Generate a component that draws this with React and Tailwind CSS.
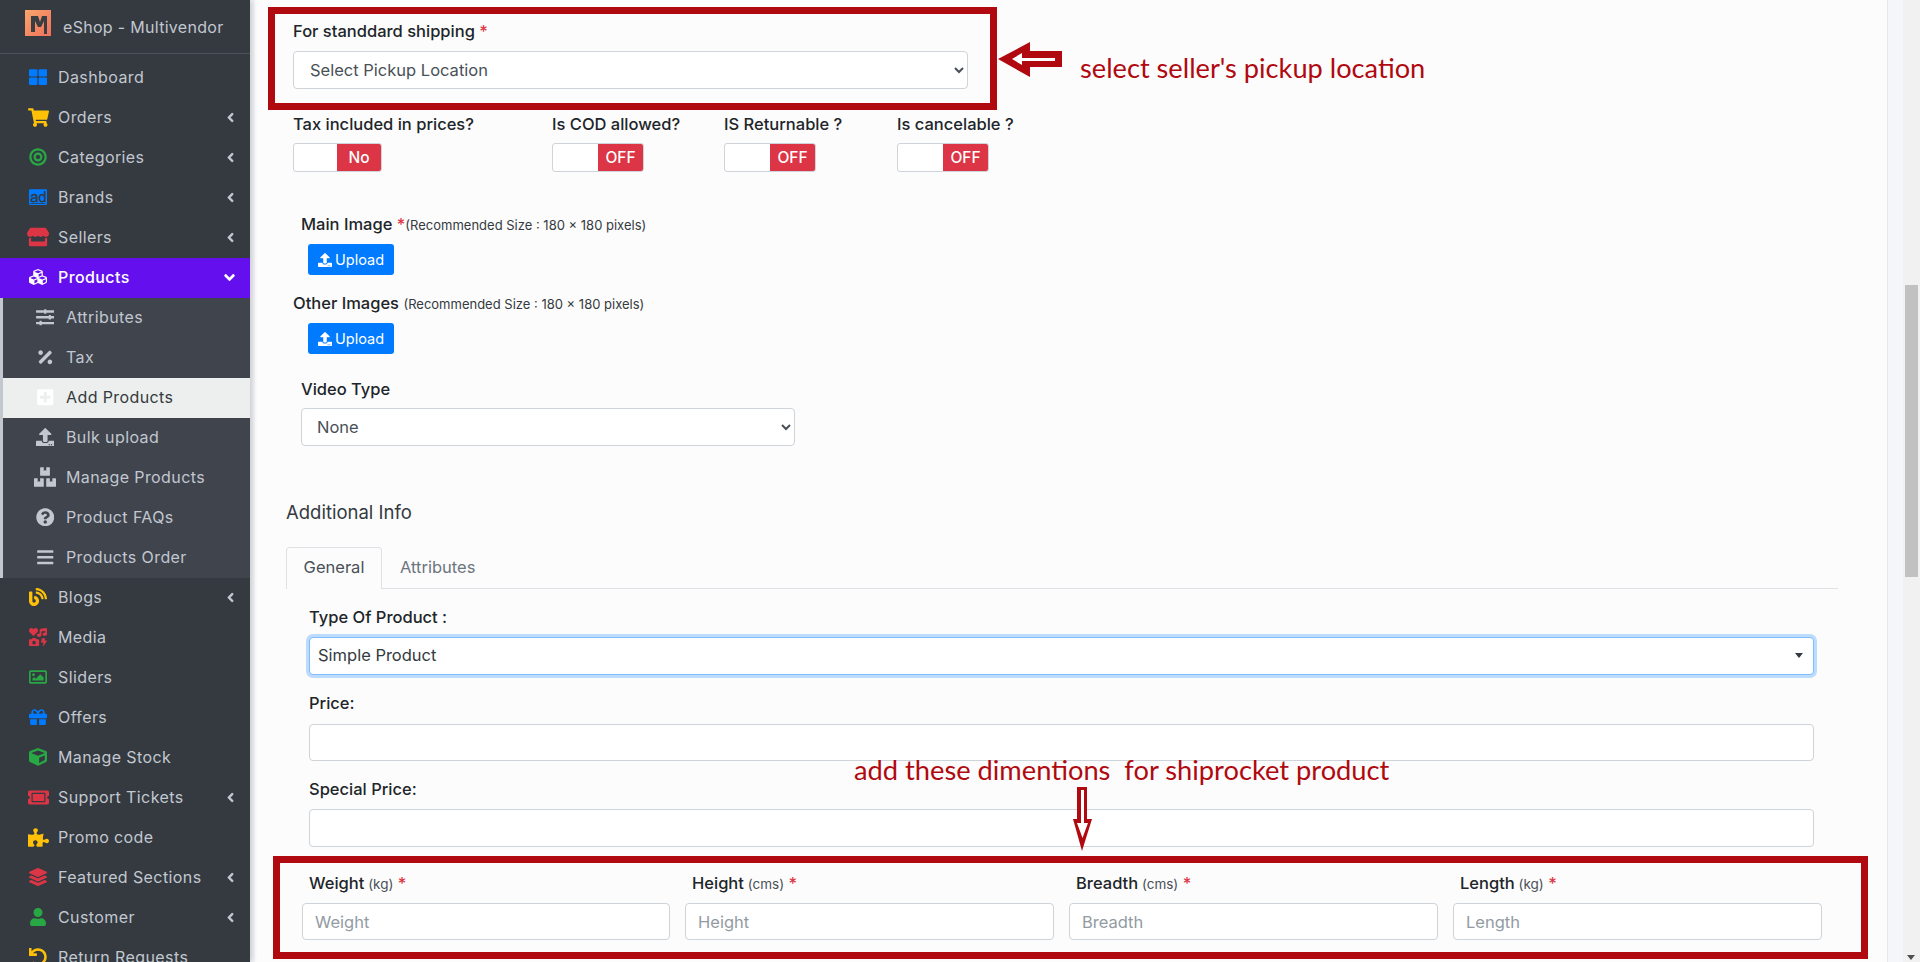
import {
  FaThLarge, FaShoppingCart, FaBullseye, FaAdversal, FaStore, FaCubes, FaSlidersH, FaPercentage,
  FaPlusSquare, FaUpload, FaBoxes, FaQuestionCircle, FaBars, FaBlog, FaIcons, FaRegImage,
  FaGift, FaCube, FaTicketAlt, FaPuzzlePiece, FaLayerGroup, FaUser, FaUndo, FaAngleLeft, FaAngleDown,
} from "react-icons/fa";

const topItems = [
  { label: "Dashboard", icon: FaThLarge, color: "text-[#007bff]" },
  { label: "Orders", icon: FaShoppingCart, color: "text-[#ffc107]", size: "text-[21px]", arrow: true },
  { label: "Categories", icon: FaBullseye, color: "text-[#28a745]", arrow: true },
  { label: "Brands", icon: FaAdversal, color: "text-[#007bff]", arrow: true },
  { label: "Sellers", icon: FaStore, color: "text-[#dc3545]", size: "text-[22px]", arrow: true },
];

const subItems = [
  { label: "Attributes", icon: FaSlidersH },
  { label: "Tax", icon: FaPercentage },
  { label: "Add Products", icon: FaPlusSquare, active: true },
  { label: "Bulk upload", icon: FaUpload },
  { label: "Manage Products", icon: FaBoxes, size: "text-[22px]" },
  { label: "Product FAQs", icon: FaQuestionCircle },
  { label: "Products Order", icon: FaBars },
];

const bottomItems = [
  { label: "Blogs", icon: FaBlog, color: "text-[#ffc107]", arrow: true },
  { label: "Media", icon: FaIcons, color: "text-[#dc3545]" },
  { label: "Sliders", icon: FaRegImage, color: "text-[#28a745]" },
  { label: "Offers", icon: FaGift, color: "text-[#007bff]" },
  { label: "Manage Stock", icon: FaCube, color: "text-[#28a745]" },
  { label: "Support Tickets", icon: FaTicketAlt, color: "text-[#dc3545]", size: "text-[21px]", arrow: true },
  { label: "Promo code", icon: FaPuzzlePiece, color: "text-[#ffc107]", size: "text-[21px]" },
  { label: "Featured Sections", icon: FaLayerGroup, color: "text-[#dc3545]", arrow: true },
  { label: "Customer", icon: FaUser, color: "text-[#28a745]", arrow: true },
  { label: "Return Requests", icon: FaUndo, color: "text-[#ffc107]" },
];

const font = "font-['Inter','Liberation_Sans',sans-serif]";

function NavItem({ item }) {
  const Icon = item.icon;
  return (
    <div className="flex h-10 shrink-0 items-center pb-[2px] pl-[27px] pr-3 text-[#c2c7d0]">
      <span className={`flex w-[22px] justify-center ${item.size || "text-[18px]"} ${item.color}`}>
        <Icon />
      </span>
      <span className="ml-[9px] flex-1 text-[16px] tracking-[0.4px]">{item.label}</span>
      {item.arrow && <FaAngleLeft className="text-[15px]" />}
    </div>
  );
}

function SubItem({ item }) {
  const Icon = item.icon;
  return (
    <div
      className={
        item.active
          ? "flex h-10 items-center bg-[#ecefed] pb-[2px] pl-[30px] text-[#343a40]"
          : "flex h-10 items-center pb-[2px] pl-[30px] text-[#c2c7d0]"
      }
    >
      <span className={`flex w-[24px] justify-center ${item.size || "text-[18.5px]"} ${item.active ? "text-white" : ""}`}>
        <Icon />
      </span>
      <span className="ml-[9px] text-[16px] tracking-[0.4px]">{item.label}</span>
    </div>
  );
}

function Sidebar() {
  return (
    <aside className="relative z-10 flex w-[250px] shrink-0 flex-col overflow-hidden bg-[#343a40] shadow-[2px_0_6px_rgba(0,0,0,0.2)]">
      <div className="flex h-[54px] shrink-0 items-start border-b border-[#4b545c] pl-[25px] pt-[10px]">
        <svg width="26" height="26" viewBox="0 0 26 26">
          <defs>
            <linearGradient id="logo" x1="0" y1="0" x2="1" y2="1">
              <stop offset="0" stopColor="#f9a66c" />
              <stop offset="1" stopColor="#f0705a" />
            </linearGradient>
          </defs>
          <rect width="26" height="26" fill="url(#logo)" />
          <path d="M6 6h7l2 6 2-6h5v18h-3V11l-3 6h-3l-3-6v11H6z" fill="#3a3d42" />
        </svg>
        <span className="ml-[12px] mt-[6px] text-[16px] leading-[22px] tracking-[0.3px] text-[#c2c7d0]">eShop - Multivendor</span>
      </div>
      <div className="h-1 shrink-0" />
      {topItems.map((item) => (
        <NavItem key={item.label} item={item} />
      ))}
      <div className="flex h-10 shrink-0 items-center bg-[#640fee] pb-[2px] pl-[27px] pr-3 text-white">
        <span className="flex w-[22px] justify-center text-[18px]">
          <FaCubes />
        </span>
        <span className="ml-[9px] flex-1 text-[16px] font-medium tracking-[0.4px]">Products</span>
        <FaAngleDown className="text-[17px]" />
      </div>
      <div className="shrink-0 border-l-[3px] border-[#c2c7d0] bg-[#3f444d]">
        {subItems.map((item) => (
          <SubItem key={item.label} item={item} />
        ))}
      </div>
      {bottomItems.map((item) => (
        <NavItem key={item.label} item={item} />
      ))}
    </aside>
  );
}

function Label({ children, className = "" }) {
  return <div className={`h-6 text-[16.5px] font-medium leading-6 text-[#212529] ${className}`}>{children}</div>;
}

function Req() {
  return <span className="text-[#dc3545]"> *</span>;
}

function Unit({ children }) {
  return <span className="text-[13.5px] font-normal text-[#495057]"> {children}</span>;
}

function Toggle({ text, width, redWidth }) {
  return (
    <div className={`flex h-[29px] overflow-hidden rounded-[3px] border border-[#ced4da] bg-white ${width}`}>
      <div className="flex-1" />
      <div className={`flex items-center justify-center bg-[#dc3545] text-[15.5px] font-medium text-white ${redWidth}`}>{text}</div>
    </div>
  );
}

function UploadButton({ className = "" }) {
  return (
    <button className={`flex h-[31px] w-[86px] items-center justify-center gap-[3px] rounded-[3px] bg-[#007bff] text-[14.5px] text-white ${className}`}>
      <FaUpload className="text-[14px]" />
      Upload
    </button>
  );
}

const inputClass = "rounded-[4px] border border-[#ced4da] bg-white";

function DimField({ label, unit, placeholder }) {
  return (
    <div>
      <Label className="pl-[7px]">
        {label}
        <Unit>{unit}</Unit>
        <Req />
      </Label>
      <input
        placeholder={placeholder}
        className={`mt-2 h-[37px] w-full px-3 text-[16.5px] outline-none placeholder:text-[#939ba2] ${inputClass}`}
      />
    </div>
  );
}

function Form() {
  return (
    <div className="h-full overflow-hidden border-r border-[#e6e8ee] bg-[#fcfcfc] pl-[38px] pt-[19px]">
      <Label>
        For standdard shipping
        <Req />
      </Label>
      <select className={`mt-2 block h-[38px] w-[675px] pl-3 pr-1 text-[16.5px] text-[#495057] ${inputClass}`}>
        <option>Select Pickup Location</option>
      </select>

      <div className="mt-[23px] flex">
        <div className="w-[259px]">
          <Label>Tax included in prices?</Label>
          <div className="mt-[7px]"><Toggle text="No" width="w-[89px]" redWidth="w-[44px]" /></div>
        </div>
        <div className="w-[172px]">
          <Label>Is COD allowed?</Label>
          <div className="mt-[7px]"><Toggle text="OFF" width="w-[92px]" redWidth="w-[45px]" /></div>
        </div>
        <div className="w-[173px]">
          <Label>IS Returnable ?</Label>
          <div className="mt-[7px]"><Toggle text="OFF" width="w-[92px]" redWidth="w-[45px]" /></div>
        </div>
        <div>
          <Label>Is cancelable ?</Label>
          <div className="mt-[7px]"><Toggle text="OFF" width="w-[92px]" redWidth="w-[45px]" /></div>
        </div>
      </div>

      <Label className="ml-2 mt-10">
        Main Image <span className="text-[#dc3545]">*</span>
        <span className="text-[13px] font-normal text-[#343a40]">(Recommended Size : 180 x 180 pixels)</span>
      </Label>
      <UploadButton className="ml-[15px] mt-2" />

      <Label className="mt-4">
        Other Images <span className="text-[13px] font-normal text-[#343a40]">(Recommended Size : 180 x 180 pixels)</span>
      </Label>
      <UploadButton className="ml-[15px] mt-2" />

      <Label className="ml-2 mt-[23px]">Video Type</Label>
      <select className={`ml-2 mt-[7px] block h-[38px] w-[494px] pl-[11px] pr-1 text-[16.5px] text-[#495057] ${inputClass}`}>
        <option>None</option>
      </select>

      <div className="-ml-[7px] mt-[52px] h-7 text-[18.5px] leading-7 text-[#343a40]">Additional Info</div>

      <div className="-ml-[7px] mt-[21px] flex h-[42px] w-[1552px] border-b border-[#dee2e6]">
        <div className="flex h-[42px] w-[96px] items-center justify-center rounded-t-[4px] border border-b-0 border-[#dee2e6] bg-[#fcfcfc] pb-[2px] text-[16.5px] text-[#495057]">General</div>
        <div className="ml-[18px] flex h-[41px] items-center text-[16.5px] text-[#6c757d]">Attributes</div>
      </div>

      <div className="ml-4 mt-4 w-[1505px]">
        <Label>Type Of Product :</Label>
        <div className="mt-2 flex h-[38px] items-center justify-between rounded-[4px] border border-[#80bdff] bg-white pb-[1px] pl-[8px] pr-[10px] text-[16.5px] text-[#343a40] shadow-[0_0_0_3px_rgba(0,123,255,0.25)]">
          Simple Product
          <span className="h-0 w-0 border-x-4 border-t-[5px] border-x-transparent border-t-[#343a40]" />
        </div>

        <Label className="mt-4">Price:</Label>
        <div className={`mt-[9px] h-[37px] ${inputClass}`} />

        <Label className="mt-4">Special Price:</Label>
        <div className={`mt-2 h-[38px] ${inputClass}`} />
      </div>

      <div className="ml-[9px] mt-6 grid w-[1520px] grid-cols-[368px_369px_369px_369px] gap-x-[15px]">
        <DimField label="Weight" unit="(kg)" placeholder="Weight" />
        <DimField label="Height" unit="(cms)" placeholder="Height" />
        <DimField label="Breadth" unit="(cms)" placeholder="Breadth" />
        <DimField label="Length" unit="(kg)" placeholder="Length" />
      </div>
    </div>
  );
}

// red marks drawn on top of the screenshot
function Annotations() {
  const note = "absolute whitespace-pre font-['Lato','Liberation_Sans',sans-serif] text-[#b0090f]";
  return (
    <>
      <div className="absolute left-[268px] top-[7px] h-[103px] w-[729px] border-[7px] border-[#b0090f]" />
      <svg className="absolute left-[996px] top-[40px]" width="68" height="38" viewBox="0 0 68 38">
        <path d="M2 19 34 2v9h32v16H34v10z" fill="#b0090f" />
        <path d="M16 19 26 13v5h33v3H26v4z" fill="#fff" />
      </svg>
      <div className={`${note} left-[1080px] top-[50px] text-[27.2px] leading-[36px]`}>select seller's pickup location</div>
      <div className={`${note} left-[854px] top-[752px] text-[27.25px] leading-[36px]`}>add these dimentions  for shiprocket product</div>
      <svg className="absolute left-[1070px] top-[786px]" width="24" height="66" viewBox="0 0 24 66">
        <path d="M7 1h10v32h5L12 65 3 33h4z" fill="#b0090f" />
        <path d="M11 4h3v33h4l-5.5 15L7 37h4z" fill="#fff" />
      </svg>
      <div className="absolute left-[273px] top-[856px] h-[103px] w-[1595px] border-[7px] border-[#b0090f]" />
    </>
  );
}

export default function App() {
  return (
    <div className={`relative flex h-[962px] w-[1920px] overflow-hidden bg-[#f4f6f9] ${font}`}>
      <Sidebar />
      <main className="h-full flex-1 pl-[5px] pr-[15px]">
        <Form />
      </main>
      <div className="flex h-full w-[17px] shrink-0 flex-col bg-[#f1f1f1]">
        <div className="ml-[2px] mt-[285px] h-[292px] w-[13px] bg-[#c1c1c1]" />
        <div className="mt-auto mb-[2px] ml-[4px] h-0 w-0 border-x-4 border-t-[5px] border-x-transparent border-t-[#505050]" />
      </div>
      <Annotations />
    </div>
  );
}
